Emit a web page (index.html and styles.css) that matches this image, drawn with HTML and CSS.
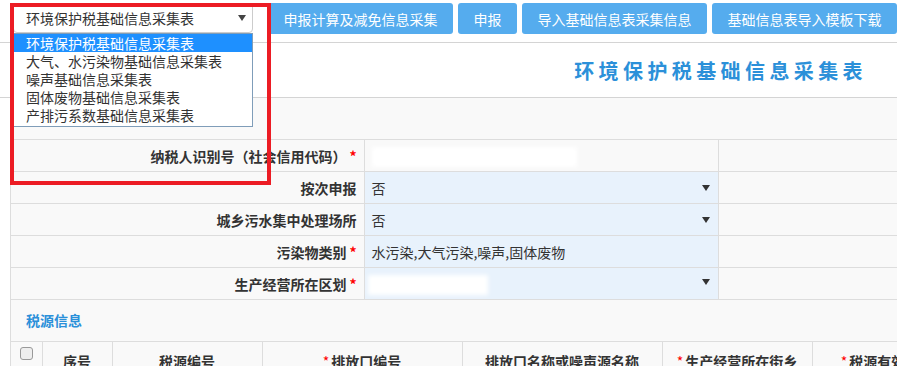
FILE: index.html
```html
<!DOCTYPE html>
<html>
<head>
  <meta charset="utf-8">
  <title>环境保护税基础信息采集表</title>
  <link rel="stylesheet" href="styles.css">
</head>
<body>
  <div class="toolbar">
    <div class="picker">
      <div class="picker-box">
        <span>环境保护税基础信息采集表</span>
        <svg class="caret" width="8" height="6" viewBox="0 0 8 6"><path d="M0 0H8L4 6Z" fill="#444"/></svg>
      </div>
      <ul class="picker-menu">
        <li class="active">环境保护税基础信息采集表</li>
        <li>大气、水污染物基础信息采集表</li>
        <li>噪声基础信息采集表</li>
        <li>固体废物基础信息采集表</li>
        <li>产排污系数基础信息采集表</li>
      </ul>
    </div>
    <button class="btn">申报计算及减免信息采集</button>
    <button class="btn small">申报</button>
    <button class="btn">导入基础信息表采集信息</button>
    <button class="btn">基础信息表导入模板下载</button>
  </div>
  <div class="mark"></div>

  <div class="heading">
    <h1>环境保护税基础信息采集表</h1>
  </div>

  <div class="panel">
    <div class="section">纳税人基本信息采集表信息</div>
    <table class="form">
      <colgroup><col class="c-label"><col class="c-value"><col></colgroup>
      <tr>
        <td class="label">纳税人识别号（社会信用代码）<i>*</i></td>
        <td class="value"><span class="smudge wide"></span></td>
        <td></td>
      </tr>
      <tr>
        <td class="label">按次申报</td>
        <td class="value pick">否<svg class="caret" width="8" height="6" viewBox="0 0 8 6"><path d="M0 0H8L4 6Z" fill="#333"/></svg></td>
        <td></td>
      </tr>
      <tr>
        <td class="label">城乡污水集中处理场所</td>
        <td class="value pick">否<svg class="caret" width="8" height="6" viewBox="0 0 8 6"><path d="M0 0H8L4 6Z" fill="#333"/></svg></td>
        <td></td>
      </tr>
      <tr>
        <td class="label">污染物类别<i>*</i></td>
        <td class="value pick">水污染,大气污染,噪声,固体废物</td>
        <td></td>
      </tr>
      <tr>
        <td class="label">生产经营所在区划<i>*</i></td>
        <td class="value pick"><span class="smudge short"></span><svg class="caret" width="8" height="6" viewBox="0 0 8 6"><path d="M0 0H8L4 6Z" fill="#333"/></svg></td>
        <td></td>
      </tr>
    </table>
    <div class="section">税源信息</div>
    <table class="grid">
      <colgroup>
        <col style="width:31px"><col style="width:70px"><col style="width:150px"><col style="width:200px">
        <col style="width:200px"><col style="width:150px"><col style="width:150px">
      </colgroup>
      <tr>
        <th class="check"><span class="box"></span></th>
        <th>序号</th>
        <th>税源编号</th>
        <th><i>*</i>排放口编号</th>
        <th>排放口名称或噪声源名称</th>
        <th><i>*</i>生产经营所在街乡</th>
        <th><i>*</i>税源有效期起</th>
      </tr>
    </table>
  </div>
</body>
</html>
```

FILE: styles.css
```css
html, body {
  margin: 0;
  padding: 0;
  overflow: hidden;
}

body {
  position: relative;
  background: white;
  color: #333;
  font-family: "Noto Sans CJK SC", "Microsoft YaHei", sans-serif;
  font-size: 14px;
}

.toolbar {
  display: flex;
  height: 43px;
  box-sizing: border-box;
  padding: 3px 0 0 13px;
  border-bottom: 1px solid #d4d4d4;
}

.picker {
  position: relative;
  flex: none;
  width: 240px;
  margin-right: 15px;
}

.picker-box {
  display: flex;
  align-items: center;
  justify-content: space-between;
  height: 30px;
  box-sizing: border-box;
  padding: 0 6px 0 12px;
  border: 1px solid #ccc;
  border-radius: 4px;
  background: white;
}

.picker-menu {
  position: absolute;
  top: 30px;
  left: 0;
  z-index: 2;
  width: 240px;
  box-sizing: border-box;
  margin: 0;
  padding: 0 0 2px;
  list-style: none;
  background: white;
  border: 1px solid #7f9db9;
}

.picker-menu li {
  height: 18px;
  line-height: 18px;
  padding-left: 12px;
  white-space: nowrap;
}

.picker-menu li.active {
  background: #1e90ff;
  color: white;
}

.btn {
  flex: none;
  width: 185px;
  height: 31px;
  margin-right: 5px;
  padding: 0;
  font-family: inherit;
  font-size: 14px;
  color: white;
  background: #55acee;
  border: none;
  border-radius: 3px;
}

.btn.small {
  width: 59px;
}

.mark {
  position: absolute;
  top: 3px;
  left: 10px;
  z-index: 3;
  width: 261px;
  height: 182px;
  box-sizing: border-box;
  border: 4px solid #ec1c24;
}

.heading {
  display: flex;
  align-items: center;
  justify-content: flex-end;
  height: 55px;
  box-sizing: border-box;
  padding-right: 30px;
  border-bottom: 1px solid #d4d4d4;
}

.heading h1 {
  margin: 0;
  font-size: 20px;
  font-weight: bold;
  letter-spacing: 4.4px;
  color: #2b90d9;
}

.panel {
  margin-left: 10px;
  overflow: hidden;
  background: #f9f9f9;
  border-left: 1px solid #ddd;
}

.section {
  height: 41px;
  line-height: 41px;
  padding-left: 15px;
  font-weight: bold;
  color: #2b90d9;
}

table {
  border-collapse: collapse;
  table-layout: fixed;
}

td, th {
  border: 1px solid #ddd;
  padding: 0;
  white-space: nowrap;
}

tr > :first-child {
  border-left: none;
}

i {
  font-style: normal;
  color: #f00;
}

.form {
  width: 1010px;
}

.c-label {
  width: 353px;
}

.c-value {
  width: 354px;
}

.form td {
  height: 31px;
}

.form .label {
  text-align: right;
  padding-right: 7px;
  font-weight: bold;
}

.form .label i {
  margin-left: 3px;
}

.form .value {
  padding-left: 7px;
  padding-right: 8px;
}

.form .pick {
  background: #e8f2fc;
}

.form .caret {
  float: right;
  margin-top: 7px;
}

.smudge {
  display: inline-block;
  vertical-align: middle;
  background: white;
  filter: blur(2px);
}

.smudge.wide {
  width: 205px;
  height: 20px;
}

.smudge.short {
  width: 120px;
  height: 20px;
  margin-left: -4px;
}

.grid {
  width: 951px;
}

.grid th {
  height: 36px;
  font-weight: bold;
  text-align: center;
}

.grid th i {
  font-weight: normal;
  margin-right: 2px;
}

.grid .check {
  vertical-align: top;
  padding-top: 2px;
}

.box {
  display: inline-block;
  width: 11px;
  height: 11px;
  border: 1px solid #999;
  border-radius: 3px;
  background: #eee;
}
```
